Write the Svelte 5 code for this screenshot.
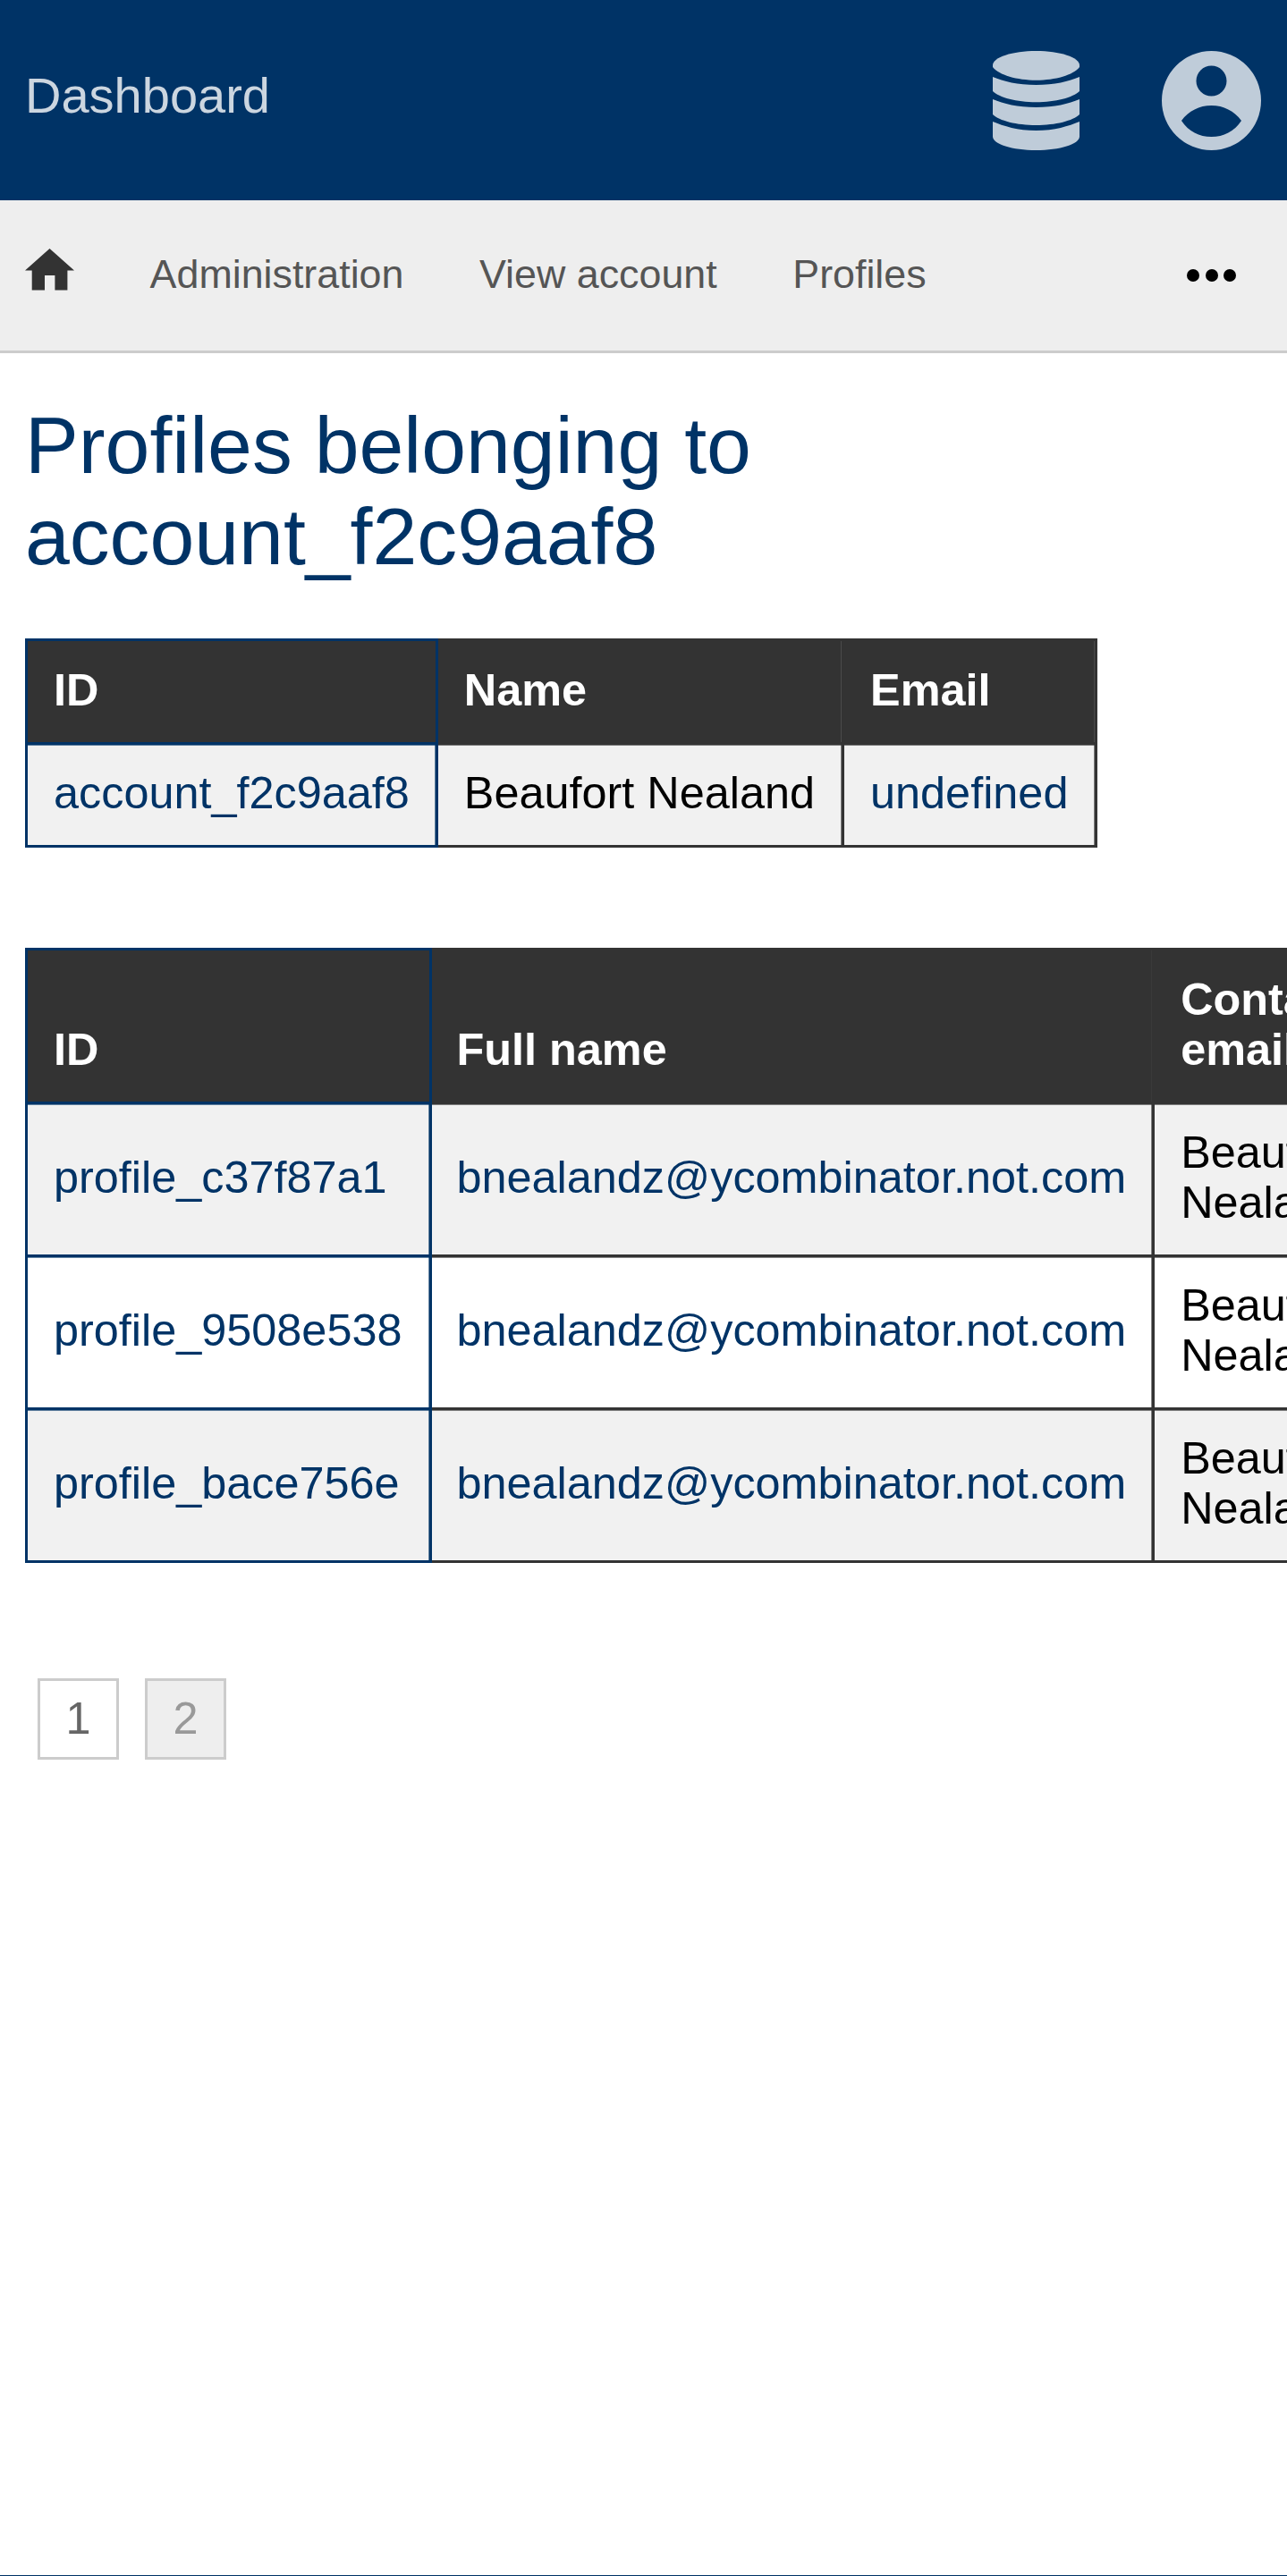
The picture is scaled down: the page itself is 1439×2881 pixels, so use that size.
<script>
	const accounts = [{ id: 'account_f2c9aaf8', name: 'Beaufort Nealand', email: 'undefined' }];
	const profiles = [
		{ id: 'profile_c37f87a1', fullName: 'bnealandz@ycombinator.not.com', contact: 'Beaufort Nealand' },
		{ id: 'profile_9508e538', fullName: 'bnealandz@ycombinator.not.com', contact: 'Beaufort Nealand' },
		{ id: 'profile_bace756e', fullName: 'bnealandz@ycombinator.not.com', contact: 'Beaufort Nealand' }
	];
</script>

<div class="page">
	<header class="top">
		<a class="brand" href="#top">Dashboard</a>
		<div class="top-icons">
			<svg class="db" viewBox="0 0 97 111" aria-hidden="true">
				<path d="M0 16C0 7 22 0 48.500 0S97 7 97 16V18C90 27 70 32.700 48.500 32.700S7 27 0 18Z" />
				<path d="M0 29C12 34 28 38 48.500 38S85 34 97 29V45C90 52 70 57.300 48.500 57.300S7 52 0 45Z" />
				<path d="M0 54C12 59 28 63 48.500 63S85 59 97 54V71C90 78 70 83 48.500 83S7 78 0 71Z" />
				<path d="M0 79C12 84 28 89 48.500 89S85 84 97 79V95.700C97 104 75 111 48.500 111S0 104 0 95.700Z" />
			</svg>
			<svg class="user" viewBox="0 0 111 111" aria-hidden="true">
				<path
					fill-rule="evenodd"
					d="M55.500 0a55.500 55.500 0 1 0 0 111a55.500 55.500 0 0 0 0-111ZM55.500 16.500a17 17 0 1 1 0 34a17 17 0 0 1 0-34ZM22 78C30 67 42 61 55.500 61S81 67 89 78C81 90 69 96 55.500 96S30 90 22 78Z"
				/>
			</svg>
		</div>
	</header>

	<nav class="menu">
		<a class="home" href="#top" aria-label="Home">
			<svg viewBox="0 0 55 47" aria-hidden="true">
				<path d="M27.500 0 55 24.600H47.400V46.600H33.400V30H22V46.600H7.700V24.600H0Z" />
			</svg>
		</a>
		<a class="link" href="#top">Administration</a>
		<a class="link" href="#top">View account</a>
		<a class="link" href="#top">Profiles</a>
		<span class="more" aria-hidden="true"><i></i><i></i><i></i></span>
	</nav>

	<main>
		<h1>Profiles belonging to account_f2c9aaf8</h1>

		<div class="scroll">
			<table class="account">
				<thead>
					<tr><th>ID</th><th>Name</th><th>Email</th></tr>
				</thead>
				<tbody>
					{#each accounts as row}
						<tr>
							<td><a href="#top">{row.id}</a></td>
							<td>{row.name}</td>
							<td><a href="#top">{row.email}</a></td>
						</tr>
					{/each}
				</tbody>
			</table>
		</div>

		<div class="scroll second">
			<table class="list">
				<thead>
					<tr><th>ID</th><th>Full name</th><th>Contact email</th></tr>
				</thead>
				<tbody>
					{#each profiles as row}
						<tr>
							<td><a href="#top">{row.id}</a></td>
							<td><a href="#top">{row.fullName}</a></td>
							<td>{row.contact}</td>
						</tr>
					{/each}
				</tbody>
			</table>
		</div>

		<div class="pages">
			<a href="#top">1</a>
			<span class="current">2</span>
		</div>
	</main>
</div>

<style>
	:global(body) {
		margin: 0;
		background: #fff;
		font-family: 'Liberation Sans', Arial, sans-serif;
	}

	a {
		color: inherit;
		text-decoration: none;
	}

	.page {
		height: 2881px;
		box-sizing: border-box;
		border-bottom: 1px solid #003366;
		overflow: hidden;
	}

	.top {
		height: 224px;
		background: #003366;
		display: flex;
		align-items: center;
		justify-content: space-between;
		padding: 0 29px 0 28px;
	}

	.brand {
		font-size: 56px;
		color: #ccd6e0;
		margin-bottom: 12px;
	}

	.top-icons {
		display: flex;
		align-items: center;
		gap: 92px;
	}

	.top-icons svg {
		display: block;
		fill: #bfccd9;
	}

	.db {
		width: 97px;
		height: 111px;
	}

	.user {
		width: 111px;
		height: 111px;
	}

	.menu {
		height: 168px;
		background: #eee;
		border-bottom: 3px solid #ccc;
		display: flex;
		align-items: center;
		padding: 0 57px 0 28px;
		font-size: 44.800px;
		color: #555;
		gap: 84.600px;
	}

	.home {
		display: block;
		margin-bottom: 14px;
	}

	.home svg {
		display: block;
		width: 55px;
		height: 47px;
		fill: #333;
	}

	.link {
		margin-bottom: 3px;
	}

	.more {
		margin-left: auto;
		display: flex;
		gap: 6.500px;
	}

	.more i {
		display: block;
		width: 14px;
		height: 14px;
		border-radius: 50%;
		background: #000;
	}

	main {
		padding: 0 0 0 28px;
	}

	h1 {
		margin: 52px 28px 0 0;
		font-size: 89.600px;
		font-weight: 400;
		line-height: 102px;
		color: #003366;
	}

	.scroll {
		margin-top: 63px;
		overflow: hidden;
	}

	.second {
		margin-top: 112px;
	}

	table {
		border-collapse: collapse;
		font-size: 50.400px;
		line-height: 56px;
		color: #000;
	}

	th,
	td {
		border: 3px solid #333;
		padding: 26px 29px 30px;
		text-align: left;
	}

	.account td:not(:first-child),
	.account th:not(:first-child) {
		padding-right: 30px;
	}

	.list th:first-child,
	.list td:first-child {
		padding-right: 31px;
	}

	.list th:nth-child(2),
	.list td:nth-child(2) {
		padding-left: 27px;
	}

	th {
		background: #333;
		color: #fff;
		font-weight: 700;
		vertical-align: bottom;
		padding-top: 27px;
		padding-bottom: 30px;
		box-shadow: inset -1px 0 0 #4a4a4a;
	}

	.list th {
		box-shadow: inset -1px 0 0 #3a3a3a;
	}

	td {
		box-shadow:
			inset 0 1px 0 rgba(51, 51, 51, 0.6),
			inset -1px 0 0 rgba(51, 51, 51, 0.6);
	}

	th:first-child,
	td:first-child {
		border-color: #003366;
	}

	.list th:first-child,
	.account th:first-child {
		box-shadow: none;
	}

	td:first-child {
		box-shadow:
			inset 0 1px 0 rgba(0, 51, 102, 0.6),
			inset -1px 0 0 rgba(0, 51, 102, 0.6);
	}

	td a {
		color: #003366;
	}

	tbody tr:nth-child(odd) td {
		background: #f1f1f1;
	}

	.pages {
		margin: 129px 0 0 14px;
		display: flex;
		gap: 29px;
		font-size: 50.400px;
	}

	.pages a,
	.pages span {
		box-sizing: border-box;
		width: 91px;
		height: 91px;
		padding-bottom: 3px;
		border: 3px solid #ccc;
		display: flex;
		align-items: center;
		justify-content: center;
		color: #666;
	}

	.pages .current {
		background: #eee;
		color: #999;
	}
</style>
